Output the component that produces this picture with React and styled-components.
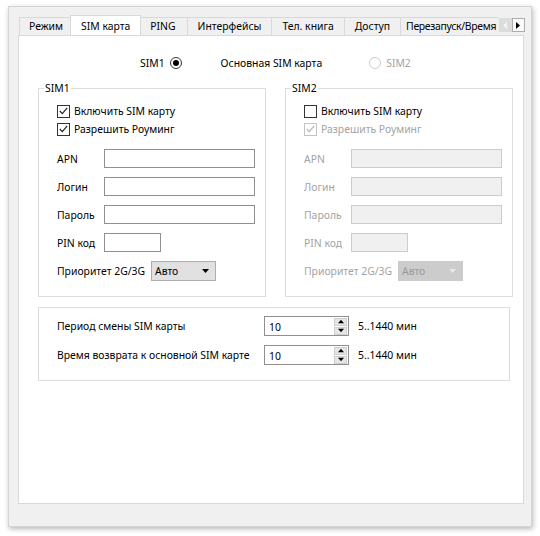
import React from 'react';
import styled, { createGlobalStyle, css } from 'styled-components';

const GlobalStyle = createGlobalStyle`
  html, body {
    margin: 0;
    padding: 0;
    background: #ffffff;
  }
  body {
    font-family: "Noto Sans", "Open Sans", sans-serif;
    font-size: 10.4px;
    color: #000;
  }
`;

const Page = styled.div`
  width: 540px;
  height: 536px;
  padding: 6px 0 0 8px;
  box-sizing: border-box;
`;

const Window = styled.div`
  width: 524px;
  height: 521px;
  box-sizing: border-box;
  background: #f0f0f0;
  border: 1px solid #d4d4d4;
  box-shadow: 1px 2px 5px rgba(0, 0, 0, 0.28);
  padding: 8px 7px 22px 9px;
  display: flex;
  flex-direction: column;
`;

const TabBar = styled.div`
  display: flex;
  align-items: flex-end;
  height: 20px;
  position: relative;
  z-index: 2;
`;

const TabStrip = styled.div`
  display: flex;
  align-items: flex-end;
  flex: 1;
  height: 100%;
  overflow: hidden;
  padding-left: 2px;
`;

const Tab = styled.div`
  flex: none;
  height: 18px;
  line-height: 17px;
  box-sizing: border-box;
  padding: 0 ${p => p.$pad}px;
  letter-spacing: ${p => p.$spacing || 0}px;
  border: 1px solid #d9d9d9;
  border-bottom: none;
  margin-left: -1px;
  background: #f0f0f0;
  white-space: nowrap;
  ${p => p.$active && css`
    height: 21px;
    line-height: 20px;
    margin: 0 -2px -1px -3px;
    padding: 0 ${p.$pad + 2}px;
    background: #ffffff;
    position: relative;
    z-index: 1;
  `}
`;

const ScrollButtons = styled.div`
  flex: none;
  display: flex;
  align-self: flex-start;
  margin-top: 3px;
  margin-right: -1px;
`;

const ScrollButton = styled.div`
  width: 13px;
  height: 14px;
  box-sizing: border-box;
  display: flex;
  align-items: center;
  justify-content: center;
  background: ${p => (p.$disabled ? '#dcdcdc' : '#fafafa')};
  border: 1px solid ${p => (p.$disabled ? '#dcdcdc' : '#adadad')};
`;

const Pane = styled.div`
  flex: 1;
  background: #ffffff;
  border: 1px solid #d9d9d9;
  padding: 19px 12px 0 19px;
  display: flex;
  flex-direction: column;
`;

const SimSwitch = styled.div`
  display: flex;
  align-items: center;
  height: 16px;
  padding-left: 102px;
`;

const SwitchText = styled.span`
  color: ${p => (p.$disabled ? '#a3a3a3' : '#000')};
  margin-left: ${p => p.$gap || 0}px;
`;

const RadioDot = styled.span`
  width: 12px;
  height: 12px;
  box-sizing: border-box;
  border-radius: 50%;
  border: 1px solid ${p => (p.$disabled ? '#cccccc' : '#333333')};
  margin-left: ${p => p.$gap || 0}px;
  display: flex;
  align-items: center;
  justify-content: center;
  &::after {
    content: '';
    width: 6px;
    height: 6px;
    border-radius: 50%;
    background: ${p => (p.$checked ? '#000' : 'transparent')};
  }
`;

const Columns = styled.div`
  display: grid;
  grid-template-columns: 228px 228px;
  column-gap: 19px;
  margin-top: 10px;
`;

const Group = styled.fieldset`
  margin: 0;
  min-width: 0;
  border: 1px solid #dcdcdc;
  padding: 7px 10px 16px 18px;
`;

const Legend = styled.legend`
  padding: 0 1px;
  margin-left: -13px;
  line-height: 14px;
`;

const CheckRow = styled.label`
  display: flex;
  align-items: center;
  height: 18px;
  gap: 4px;
  color: ${p => (p.$disabled ? '#a3a3a3' : '#000')};
`;

const Box = styled.span`
  width: 13px;
  height: 13px;
  box-sizing: border-box;
  border: 1px solid ${p => (p.$disabled ? '#c4c4c4' : '#333333')};
  display: flex;
  align-items: center;
  justify-content: center;
  background: #fff;
`;

const Fields = styled.div`
  display: flex;
  flex-direction: column;
  gap: 9px;
  margin-top: 11px;
`;

const FieldRow = styled.div`
  display: flex;
  align-items: center;
  height: 19px;
`;

const FieldLabel = styled.span`
  width: ${p => p.$width || 47}px;
  flex: none;
  color: ${p => (p.$disabled ? '#a3a3a3' : '#000')};
`;

const TextBox = styled.div`
  width: ${p => p.$width}px;
  height: 19px;
  box-sizing: border-box;
  border: 1px solid ${p => (p.$disabled ? '#cccccc' : '#8f8f8f')};
  background: ${p => (p.$disabled ? '#f0f0f0' : '#ffffff')};
`;

const Combo = styled.div`
  width: 65px;
  height: 20px;
  box-sizing: border-box;
  margin-top: 1px;
  padding: 0 6px 0 3px;
  display: flex;
  align-items: center;
  justify-content: space-between;
  background: ${p => (p.$disabled ? '#cccccc' : '#e1e1e1')};
  border: 1px solid ${p => (p.$disabled ? '#cccccc' : '#adadad')};
  color: ${p => (p.$disabled ? '#9a9a9a' : '#000')};
`;

const TimerGroup = styled.div`
  width: 472px;
  box-sizing: border-box;
  margin-top: 10px;
  border: 1px solid #dcdcdc;
  padding: 8px 0 15px 18px;
  display: flex;
  flex-direction: column;
  gap: 9px;
`;

const TimerRow = styled.div`
  display: flex;
  align-items: center;
  height: 20px;
`;

const SpinBox = styled.div`
  width: 85px;
  height: 20px;
  box-sizing: border-box;
  border: 1px solid #8f8f8f;
  display: flex;
  align-items: stretch;
  background: #fff;
`;

const SpinValue = styled.span`
  flex: 1;
  padding: 3px 0 0 4px;
`;

const SpinButtons = styled.div`
  width: 13px;
  display: flex;
  flex-direction: column;
  padding: 1px 1px 1px 0;
  gap: 1px;
`;

const SpinButton = styled.div`
  flex: 1;
  background: #e6e6e6;
  border: 1px solid #cfcfcf;
  display: flex;
  align-items: center;
  justify-content: center;
`;

const Range = styled.span`
  margin-left: 9px;
`;

const Triangle = ({ dir, color = '#000', size = 7 }) => {
  const pts = {
    up: '0,5 3.5,1 7,5',
    down: '0,1 3.5,5 7,1',
    left: '5,0 1,3.5 5,7',
    right: '1,0 5,3.5 1,7',
  }[dir];
  return (
    <svg width={size} height={size} viewBox="0 0 7 7">
      <polygon points={pts} fill={color} />
    </svg>
  );
};

const Check = ({ checked, disabled }) => (
  <Box $disabled={disabled}>
    {checked && (
      <svg width="9" height="8" viewBox="0 0 9 8">
        <polyline
          points="0.8,4 3.3,6.6 8.2,0.8"
          fill="none"
          stroke={disabled ? '#b5b5b5' : '#222'}
          strokeWidth="1.2"
        />
      </svg>
    )}
  </Box>
);

const tabs = [
  { title: 'Режим', pad: 9 },
  { title: 'SIM карта', pad: 8, active: true },
  { title: 'PING', pad: 11 },
  { title: 'Интерфейсы', pad: 10 },
  { title: 'Тел. книга', pad: 10 },
  { title: 'Доступ', pad: 10 },
  { title: 'Перезапуск/Время', pad: 5, spacing: -0.3 },
];

const SimGroup = ({ title, enabled, roaming }) => {
  const off = !enabled;
  return (
    <Group>
      <Legend>{title}</Legend>
      <CheckRow>
        <Check checked={enabled} />
        Включить SIM карту
      </CheckRow>
      <CheckRow $disabled={off}>
        <Check checked={roaming} disabled={off} />
        Разрешить Роуминг
      </CheckRow>
      <Fields>
        <FieldRow>
          <FieldLabel $disabled={off}>APN</FieldLabel>
          <TextBox $width={152} $disabled={off} />
        </FieldRow>
        <FieldRow>
          <FieldLabel $disabled={off}>Логин</FieldLabel>
          <TextBox $width={152} $disabled={off} />
        </FieldRow>
        <FieldRow>
          <FieldLabel $disabled={off}>Пароль</FieldLabel>
          <TextBox $width={152} $disabled={off} />
        </FieldRow>
        <FieldRow>
          <FieldLabel $disabled={off}>PIN код</FieldLabel>
          <TextBox $width={57} $disabled={off} />
        </FieldRow>
        <FieldRow>
          <FieldLabel $width={94} $disabled={off}>Приоритет 2G/3G</FieldLabel>
          <Combo $disabled={off}>
            Авто
            <Triangle dir="down" color={off ? '#e8e8e8' : '#000'} />
          </Combo>
        </FieldRow>
      </Fields>
    </Group>
  );
};

const timers = [
  { label: 'Период смены SIM карты', value: 10 },
  { label: 'Время возврата к основной SIM карте', value: 10 },
];

export default function App() {
  return (
    <>
      <GlobalStyle />
      <Page>
        <Window>
          <TabBar>
            <TabStrip>
              {tabs.map(t => (
                <Tab key={t.title} $pad={t.pad} $spacing={t.spacing} $active={t.active}>
                  {t.title}
                </Tab>
              ))}
            </TabStrip>
            <ScrollButtons>
              <ScrollButton $disabled>
                <Triangle dir="left" color="#f4f4f4" />
              </ScrollButton>
              <ScrollButton>
                <Triangle dir="right" />
              </ScrollButton>
            </ScrollButtons>
          </TabBar>
          <Pane>
            <SimSwitch>
              <SwitchText>SIM1</SwitchText>
              <RadioDot $checked $gap={5} />
              <SwitchText $gap={39}>Основная SIM карта</SwitchText>
              <RadioDot $disabled $gap={47} />
              <SwitchText $disabled $gap={5}>SIM2</SwitchText>
            </SimSwitch>
            <Columns>
              <SimGroup title="SIM1" enabled roaming />
              <SimGroup title="SIM2" roaming />
            </Columns>
            <TimerGroup>
              {timers.map(t => (
                <TimerRow key={t.label}>
                  <FieldLabel $width={207}>{t.label}</FieldLabel>
                  <SpinBox>
                    <SpinValue>{t.value}</SpinValue>
                    <SpinButtons>
                      <SpinButton>
                        <Triangle dir="up" size={6} />
                      </SpinButton>
                      <SpinButton>
                        <Triangle dir="down" size={6} />
                      </SpinButton>
                    </SpinButtons>
                  </SpinBox>
                  <Range>5..1440 мин</Range>
                </TimerRow>
              ))}
            </TimerGroup>
          </Pane>
        </Window>
      </Page>
    </>
  );
}
